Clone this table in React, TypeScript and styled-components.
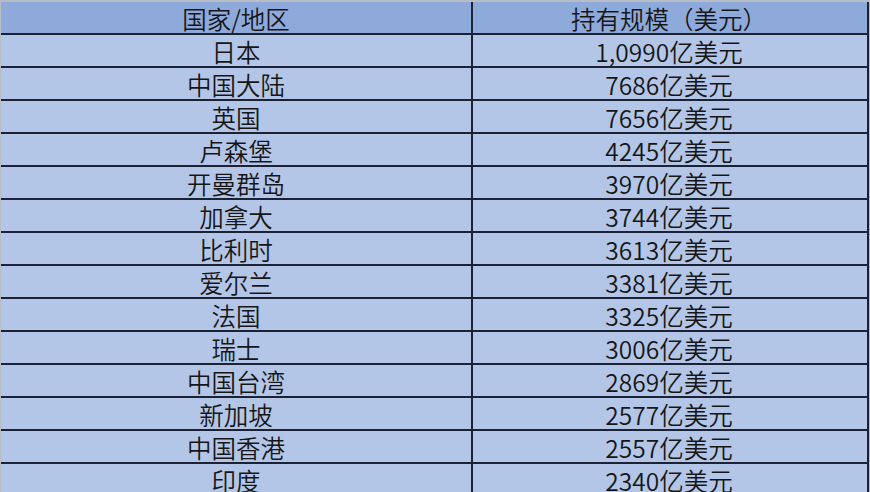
import React, { FunctionComponent } from "react";
import styled, { createGlobalStyle } from "styled-components";

const GlobalStyle = createGlobalStyle`
  html, body {
    margin: 0;
    padding: 0;
    background: #b8bcc4;
  }
`;

const Sheet = styled.div`
  width: 870px;
  height: 492px;
  overflow: hidden;
  padding-top: 2px;
  padding-left: 1px;
  box-sizing: border-box;
  background: #b8bcc4;
  font-family: "Noto Sans CJK SC", "Noto Sans", sans-serif;
  font-weight: 350;
  color: #161616;
`;

const Row = styled.div<{ $header?: boolean }>`
  display: grid;
  grid-template-columns: 472px 392px;
  width: 868px;
  height: 33px;
  box-sizing: border-box;
  border-bottom: 2px solid #1c2233;
  border-right: 2px solid #1c2233;
  background: ${(p) => (p.$header ? "#8eaadb" : "#b4c6e7")};
`;

const Cell = styled.div<{ $first?: boolean }>`
  display: flex;
  justify-content: center;
  align-items: flex-end;
  font-size: 24.5px;
  line-height: 28px;
  white-space: nowrap;
  border-right: ${(p) => (p.$first ? "2px solid #1c2233" : "none")};
`;

const rows: [string, string][] = [
  ["日本", "1,0990亿美元"],
  ["中国大陆", "7686亿美元"],
  ["英国", "7656亿美元"],
  ["卢森堡", "4245亿美元"],
  ["开曼群岛", "3970亿美元"],
  ["加拿大", "3744亿美元"],
  ["比利时", "3613亿美元"],
  ["爱尔兰", "3381亿美元"],
  ["法国", "3325亿美元"],
  ["瑞士", "3006亿美元"],
  ["中国台湾", "2869亿美元"],
  ["新加坡", "2577亿美元"],
  ["中国香港", "2557亿美元"],
  ["印度", "2340亿美元"],
];

const App: FunctionComponent = () => (
  <>
    <GlobalStyle />
    <Sheet>
      <Row $header>
        <Cell $first>国家/地区</Cell>
        <Cell>持有规模（美元）</Cell>
      </Row>
      {rows.map(([country, amount]) => (
        <Row key={country}>
          <Cell $first>{country}</Cell>
          <Cell>{amount}</Cell>
        </Row>
      ))}
    </Sheet>
  </>
);

export default App;
